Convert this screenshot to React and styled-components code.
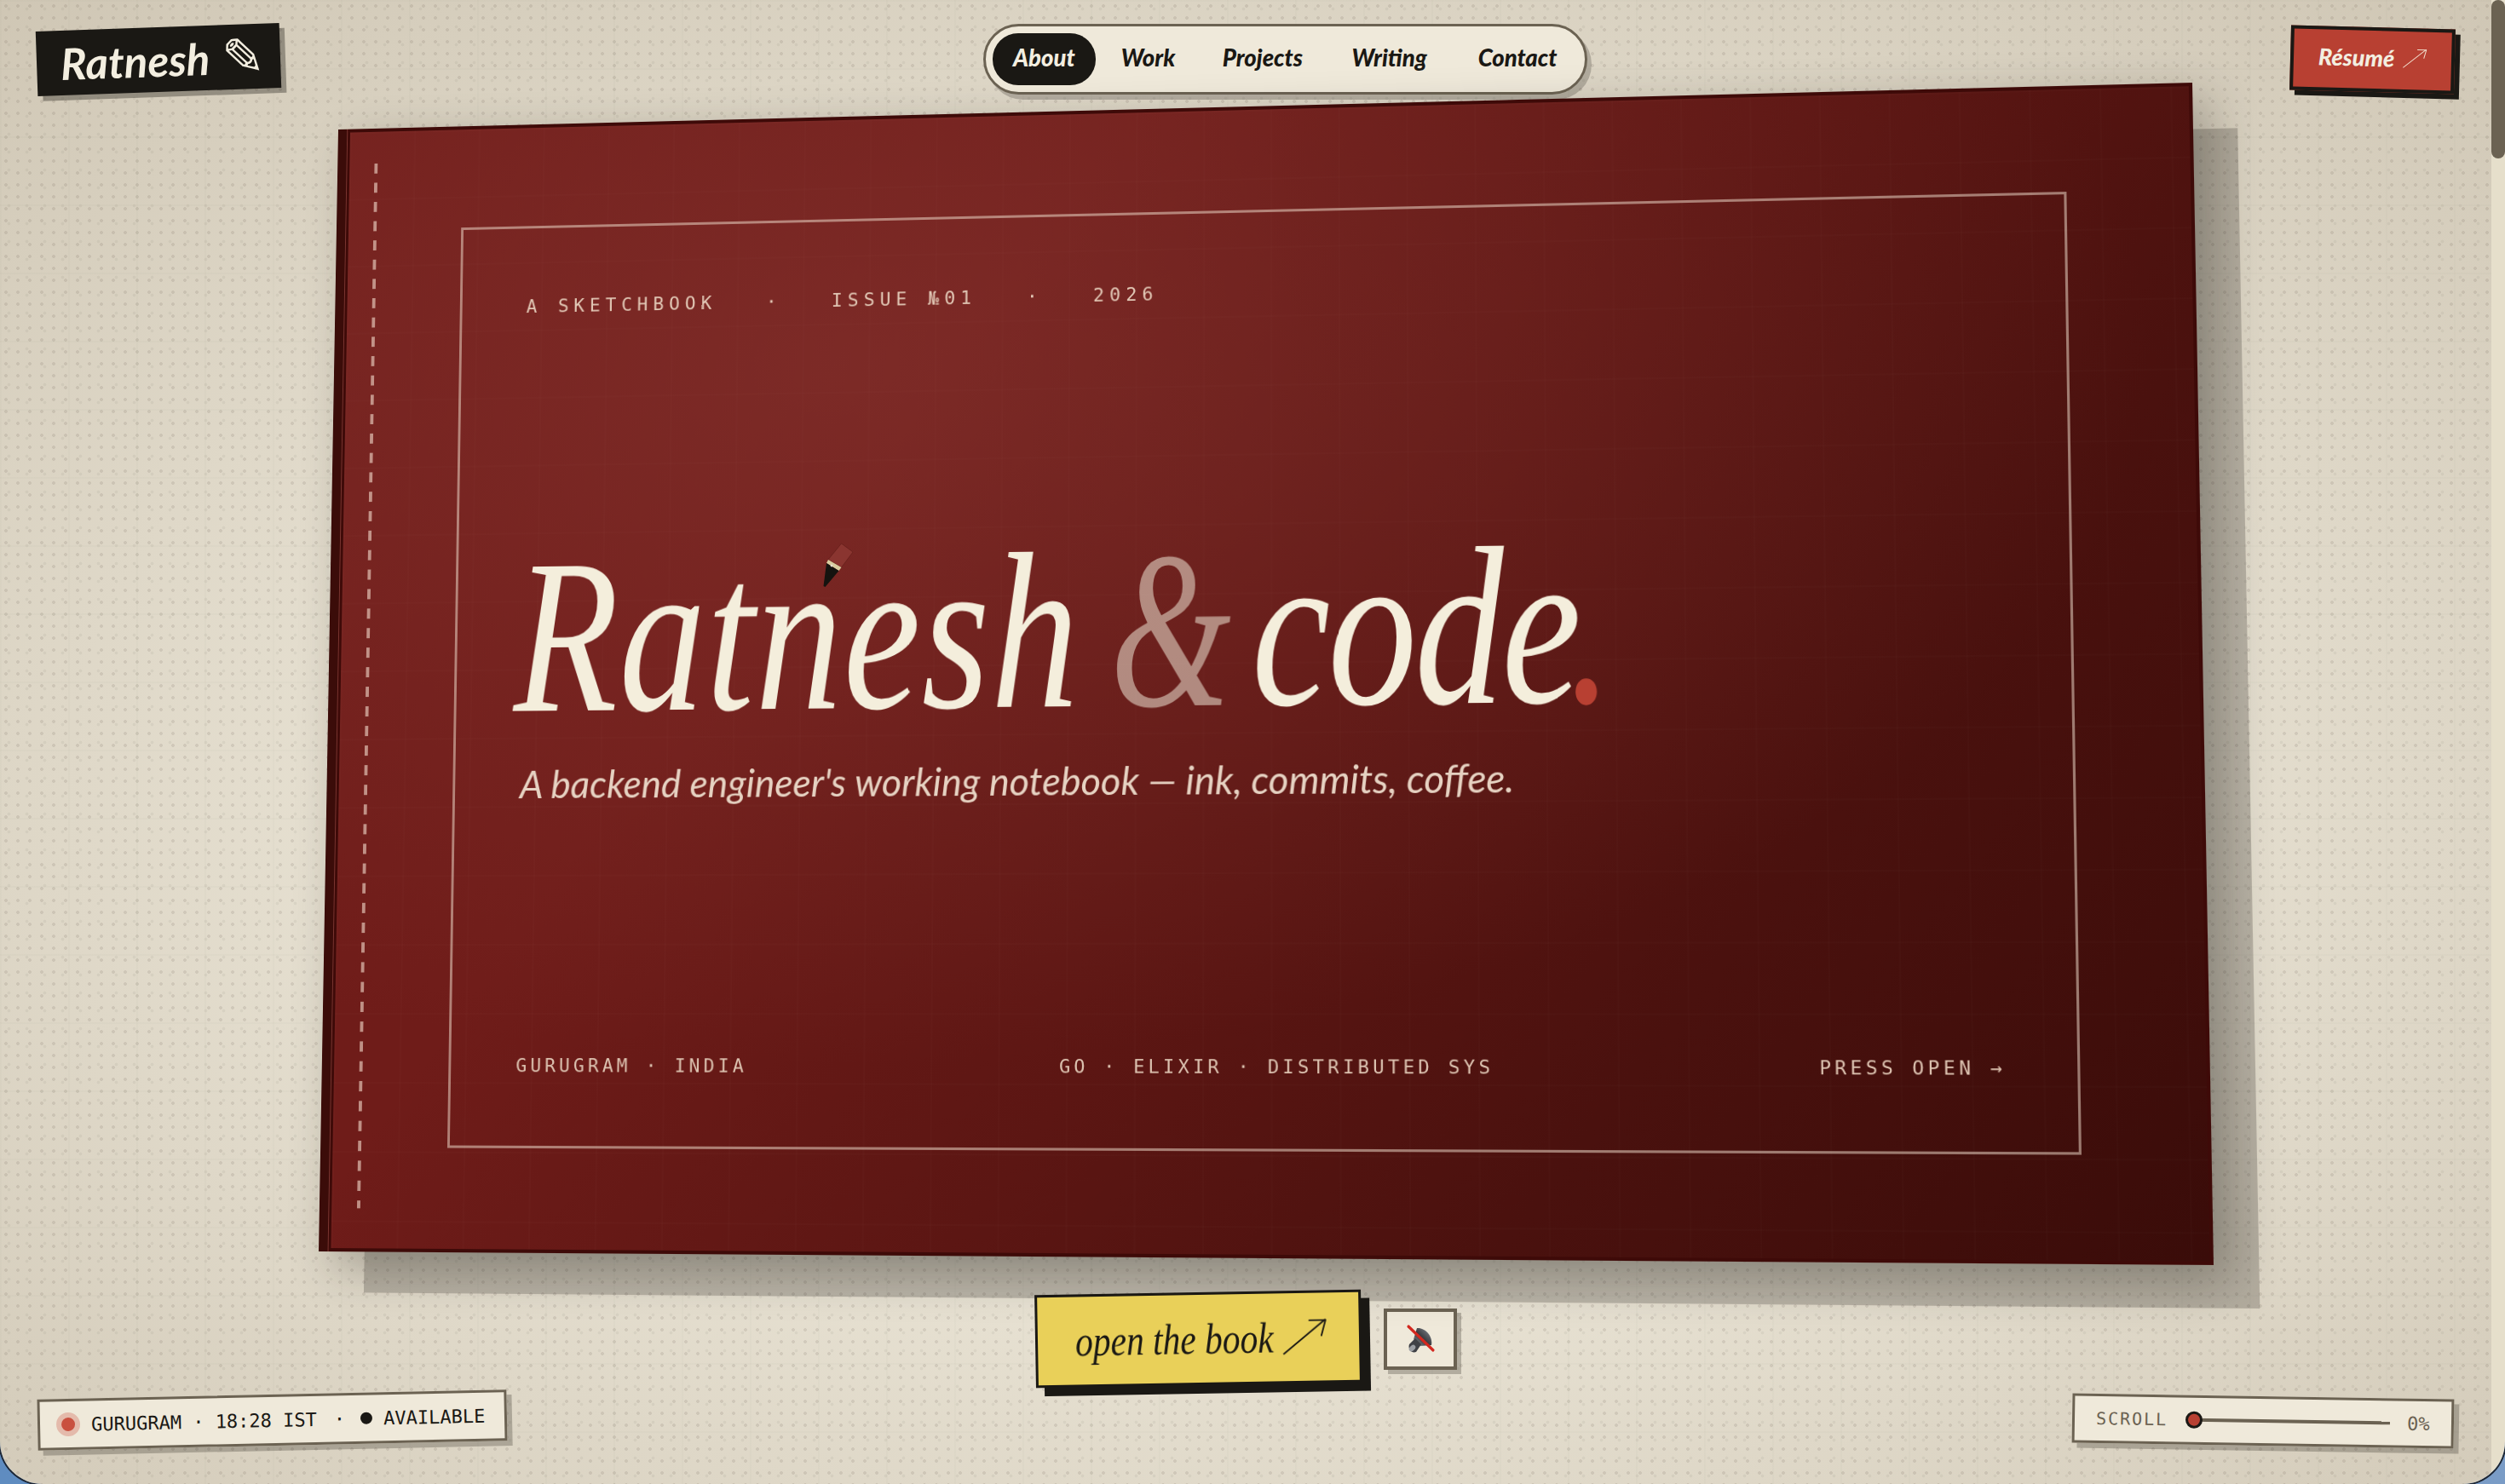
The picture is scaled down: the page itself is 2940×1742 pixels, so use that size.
import React from 'react'
import styled, {createGlobalStyle} from 'styled-components'

const INK = '#1a1814'
const CREAM = '#efe9da'
const TAUPE = '#6b6252'
const RED = '#b84032'
const HAND = '"Lato", "Noto Sans", sans-serif'
const SERIF = '"Liberation Serif", serif'
const MONO = '"DejaVu Sans Mono", monospace'

// book cover is laid out flat, then pulled onto the tilted quad seen on screen
const BOOK_W = 2200
const BOOK_H = 1320
const BOOK_LEFT = 362
const BOOK_TOP = 150

const quadMatrix = (w, h, [[x0, y0], [x1, y1], [x2, y2], [x3, y3]]) => {
  const dx1 = x1 - x2
  const dx2 = x3 - x2
  const sx = x0 - x1 + x2 - x3
  const dy1 = y1 - y2
  const dy2 = y3 - y2
  const sy = y0 - y1 + y2 - y3
  const det = dx1 * dy2 - dx2 * dy1
  const g = (sx * dy2 - dx2 * sy) / det
  const k = (dx1 * sy - sx * dy1) / det
  const a = x1 - x0 + g * x1
  const b = x3 - x0 + k * x3
  const d = y1 - y0 + g * y1
  const e = y3 - y0 + k * y3
  return `matrix3d(${[a / w, d / w, 0, g / w, b / h, e / h, 0, k / h, 0, 0, 1, 0, x0, y0, 0, 1].join(',')})`
}

const BOOK_MATRIX = quadMatrix(BOOK_W, BOOK_H, [
  [397 - BOOK_LEFT, 152 - BOOK_TOP],
  [2573 - BOOK_LEFT, 97 - BOOK_TOP],
  [2598 - BOOK_LEFT, 1485 - BOOK_TOP],
  [374 - BOOK_LEFT, 1469 - BOOK_TOP],
])

const Global = createGlobalStyle`
  html, body {
    margin: 0;
    padding: 0;
    overflow: hidden;
  }
`

const Backdrop = styled.div`
  width: 2940px;
  height: 1742px;
  overflow: hidden;
  background: linear-gradient(90deg, #5f8cc0, #7a9cc6);
`

const Window = styled.div`
  height: 100%;
  display: grid;
  grid-template-columns: 1fr 16px;
  overflow: hidden;
  border-radius: 0 0 50px 50px;
  box-shadow: 0 0 0 2px #1c2533;
`

const Paper = styled.main`
  position: relative;
  display: flex;
  flex-direction: column;
  background-color: #e7e1d2;
  background-image:
    radial-gradient(ellipse 75% 75% at 50% 55%, transparent 45%, rgba(110, 90, 60, 0.2) 100%),
    radial-gradient(circle, rgba(60, 50, 40, 0.11) 1.6px, transparent 2.2px),
    radial-gradient(circle, rgba(60, 50, 40, 0.06) 1.6px, transparent 2.2px),
    linear-gradient(rgba(60, 50, 40, 0.02) 2px, transparent 2px),
    linear-gradient(90deg, rgba(60, 50, 40, 0.02) 2px, transparent 2px);
  background-size: 100% 100%, 14px 14px, 21px 21px, 80px 80px, 80px 80px;
`

const ScrollTrack = styled.div`
  background: #e6dfcb;
`

const ScrollThumb = styled.div`
  height: 186px;
  border-radius: 8px;
  background: ${TAUPE};
`

const Header = styled.header`
  height: 83px;
  padding: 28px 43px 0;
  display: flex;
  align-items: center;
  justify-content: space-between;
`

const Logo = styled.a`
  width: 286px;
  height: 76px;
  padding-left: 28px;
  box-sizing: border-box;
  display: flex;
  align-items: center;
  gap: 14px;
  background: ${INK};
  color: #f3eee0;
  font: italic 700 51px ${HAND};
  transform: rotate(-2deg);
  box-shadow: 6px 6px 0 rgba(26, 22, 16, 0.35);
`

const Pencil = styled.span`
  font: normal 60px/1 "DejaVu Sans", sans-serif;
`

const Nav = styled.nav`
  width: 709px;
  height: 83px;
  box-sizing: border-box;
  padding: 0 8px;
  display: flex;
  align-items: center;
  border: 3px solid ${TAUPE};
  border-radius: 42px;
  background: ${CREAM};
  box-shadow: 5px 6px 0 rgba(26, 22, 16, 0.22);
`

const NavItem = styled.a`
  height: 61px;
  padding: 0 ${p => p.$pad}px 4px;
  box-sizing: border-box;
  display: flex;
  align-items: center;
  border-radius: 30px;
  font: italic 900 27.5px ${HAND};
  color: ${p => (p.$active ? '#f3eee0' : INK)};
  background: ${p => (p.$active ? INK : 'transparent')};
`

const ResumeLink = styled.a`
  width: 193px;
  height: 76px;
  padding-bottom: 5px;
  box-sizing: border-box;
  display: flex;
  align-items: center;
  justify-content: center;
  gap: 10px;
  border: 4px solid ${INK};
  background: ${RED};
  color: #f3eee0;
  font: italic 900 27px ${HAND};
  transform: rotate(1.5deg);
  box-shadow: 6px 6px 0 ${INK};
`

const Book = styled.section`
  position: relative;
  flex: none;
  width: ${BOOK_W}px;
  height: ${BOOK_H}px;
  margin: 39px auto 0;
  display: flex;
  transform-origin: 0 0;
  transform: ${BOOK_MATRIX};
  box-shadow: 53px 50px 0 -3px rgba(26, 22, 16, 0.22), 18px 18px 50px rgba(26, 22, 16, 0.3);
`

const Spine = styled.div`
  flex: none;
  width: 11px;
  background: #3b0c09;
  border-right: 1px solid #7a3530;
`

const Cover = styled.div`
  position: relative;
  flex: 1;
  min-width: 0;
  box-sizing: border-box;
  padding: 117px 140px 116px 140px;
  display: flex;
  border: 4px solid #3e0a08;
  border-left-width: 3px;
  background:
    radial-gradient(ellipse 70% 62% at 28% 22%, rgba(150, 70, 65, 0.34), transparent 100%),
    linear-gradient(rgba(255, 240, 220, 0.012) 2px, transparent 2px) 0 0 / 80px 80px,
    linear-gradient(90deg, rgba(255, 240, 220, 0.012) 2px, transparent 2px) 0 0 / 80px 80px,
    linear-gradient(128deg, #701c19 0%, #6f1c19 30%, #5c1613 55%, #4a110e 75%, #3a0c09 100%);
`

const Stitches = styled.div`
  position: absolute;
  top: 38px;
  bottom: 46px;
  left: 31px;
  width: 4px;
  background: repeating-linear-gradient(rgba(240, 215, 200, 0.62) 0 12px, transparent 12px 23px);
`

const Frame = styled.div`
  flex: 1;
  min-width: 0;
  padding: 0 80px 0 79px;
  display: flex;
  flex-direction: column;
  border: 3px solid rgba(240, 222, 205, 0.52);
`

const MetaRow = styled.div`
  margin-top: 80px;
  display: flex;
  gap: 60px;
  font: 22px ${MONO};
  letter-spacing: 6.2px;
  color: #e2c8b6;
  white-space: nowrap;
`

const Title = styled.h1`
  margin: 242px 0 0 -9px;
  font: italic 400 258px/1.05 ${SERIF};
  word-spacing: -30px;
  color: #f4eedc;
  white-space: nowrap;
  transform: scaleX(0.805);
  transform-origin: 0 50%;
`

const TitleWord = styled.span`
  letter-spacing: ${p => p.$track}px;
`

const Amp = styled.span`
  display: inline-block;
  margin: 0 -16px 0 -2px;
  color: rgba(244, 238, 220, 0.52);
  transform: scaleX(0.88);
`

const Dot = styled.span`
  margin-left: -16px;
  color: ${RED};
`

const Subtitle = styled.p`
  margin: 8px 0 0;
  font: italic 400 45.5px ${HAND};
  color: #e6d2c2;
  white-space: nowrap;
`

const FootRow = styled.div`
  margin-top: auto;
  margin-bottom: 80px;
  display: flex;
  justify-content: space-between;
  font: 22px ${MONO};
  color: #dcc2b0;
  white-space: nowrap;
`

const FootItem = styled.span`
  letter-spacing: ${p => p.$spacing}px;
`

const Footer = styled.footer`
  flex: 1;
  padding: 0 44px 45px;
  display: grid;
  grid-template-columns: 1fr auto 1fr;
`

const CtaGroup = styled.div`
  align-self: start;
  margin-top: 47px;
  display: flex;
  align-items: center;
  gap: 26px;
`

const OpenButton = styled.button`
  width: 383px;
  height: 109px;
  padding: 0 0 0 44px;
  box-sizing: border-box;
  display: flex;
  align-items: center;
  gap: 10px;
  border: 3px solid ${INK};
  background: #e9d059;
  color: ${INK};
  font: italic 400 50px ${SERIF};
  transform: rotate(-1deg);
  box-shadow: 10px 10px 0 ${INK};
`

const OpenLabel = styled.span`
  display: inline-block;
  width: 233px;
  white-space: nowrap;
  transform: scaleX(0.83);
  transform-origin: 0 50%;
`

const MuteButton = styled.button`
  width: 86px;
  height: 72px;
  padding: 0;
  box-sizing: border-box;
  display: flex;
  align-items: center;
  justify-content: center;
  border: 4px solid ${TAUPE};
  background: ${CREAM};
  box-shadow: 5px 5px 0 rgba(26, 22, 16, 0.25);
`

const Plate = styled.div`
  height: ${p => p.$height}px;
  box-sizing: border-box;
  display: flex;
  align-items: center;
  border: 3px solid ${TAUPE};
  background: ${CREAM};
  font: 22px ${MONO};
  white-space: nowrap;
  box-shadow: 6px 6px 0 rgba(26, 22, 16, 0.25);
`

const StatusPlate = styled(Plate)`
  align-self: end;
  justify-self: start;
  width: 551px;
  padding-left: 19px;
  color: ${INK};
  transform: rotate(-1.2deg);
`

const ScrollPlate = styled(Plate)`
  align-self: end;
  justify-self: end;
  width: 448px;
  padding-left: 25px;
  color: ${TAUPE};
  transform: rotate(0.9deg);
`

const Recording = styled.span`
  width: 16px;
  height: 16px;
  margin: 0 19px 0 6px;
  border-radius: 50%;
  background: #c9503f;
  box-shadow: 0 0 0 6px rgba(201, 80, 63, 0.3);
`

const Sep = styled.span`
  margin: 0 18px 0 20px;
`

const Available = styled.span`
  width: 14px;
  height: 14px;
  margin-right: 13px;
  border-radius: 50%;
  background: ${INK};
`

const ScrollLabel = styled.span`
  font-size: 20px;
  letter-spacing: 2px;
`

const ScrollRail = styled.div`
  position: relative;
  width: 230px;
  height: 4px;
  margin: 0 20px 0 31px;
  background: ${TAUPE};
`

const ScrollKnob = styled.span`
  position: absolute;
  left: -10px;
  top: -8px;
  width: 20px;
  height: 20px;
  box-sizing: border-box;
  border: 3px solid ${INK};
  border-radius: 50%;
  background: ${RED};
`

const PenCursor = styled.svg`
  position: absolute;
  left: 960px;
  top: 632px;
  width: 48px;
  height: 64px;
`

const NAV = [
  {label: 'About', pad: 24, active: true},
  {label: 'Work', pad: 30},
  {label: 'Projects', pad: 25.5},
  {label: 'Writing', pad: 32},
  {label: 'Contact', pad: 28},
]

const LongArrow = ({size, color, width}) => (
  <svg width={size} height={size * 0.82} viewBox="0 0 50 41" fill="none" stroke={color} strokeWidth={width}>
    <path d="M1 40 L49 1 M30 2 H49 L44 20"/>
  </svg>
)

const MutedSpeaker = () => (
  <svg width="36" height="36" viewBox="0 0 36 36">
    <defs>
      <linearGradient id="cone" x1="0" y1="1" x2="1" y2="0">
        <stop offset="0" stopColor="#a4a7ab"/>
        <stop offset="0.45" stopColor="#36383d"/>
        <stop offset="1" stopColor="#8d9096"/>
      </linearGradient>
    </defs>
    <path d="M14 5 C23 4 33 14 31 25 L18 26 L10 18 Z" fill="url(#cone)"/>
    <path d="M12 17 L19 24 L13 33 C8 35 3 30 5 24 Z" fill="#3f4146"/>
    <ellipse cx="8.5" cy="28.5" rx="3" ry="4.4" fill="#9b9ea3" transform="rotate(45 8.5 28.5)"/>
    <path d="M4 3 L33 31" stroke="#d3281f" strokeWidth="3.2" strokeLinecap="round"/>
  </svg>
)

const App = () => (
  <Backdrop>
    <Global/>
    <Window>
      <Paper>
        <Header>
          <Logo>Ratnesh <Pencil>✎</Pencil></Logo>
          <Nav>
            {NAV.map(item => (
              <NavItem key={item.label} $pad={item.pad} $active={item.active}>{item.label}</NavItem>
            ))}
          </Nav>
          <ResumeLink>Résumé <LongArrow size={28} color="#f0dccb" width={1.8}/></ResumeLink>
        </Header>

        <Book>
          <Spine/>
          <Cover>
            <Stitches/>
            <Frame>
              <MetaRow>
                <span>A SKETCHBOOK</span>
                <span>·</span>
                <span>ISSUE №01</span>
                <span>·</span>
                <span>2026</span>
              </MetaRow>
              <Title>
                <TitleWord $track={2.3}>Ratnesh</TitleWord> <Amp>&amp;</Amp> <TitleWord $track={-3.5}>code</TitleWord><Dot>.</Dot>
              </Title>
              <Subtitle>A backend engineer's working notebook — ink, commits, coffee.</Subtitle>
              <FootRow>
                <FootItem $spacing={4.2}>GURUGRAM · INDIA</FootItem>
                <FootItem $spacing={4.2}>GO · ELIXIR · DISTRIBUTED SYS</FootItem>
                <FootItem $spacing={4.2}>PRESS OPEN →</FootItem>
              </FootRow>
            </Frame>
          </Cover>
        </Book>

        <Footer>
          <StatusPlate $height={60}>
            <Recording/>
            <span>GURUGRAM · 18:28 IST</span>
            <Sep>·</Sep>
            <Available/>
            <span>AVAILABLE</span>
          </StatusPlate>
          <CtaGroup>
            <OpenButton>
              <OpenLabel>open the book</OpenLabel>
              <LongArrow size={52} color={INK} width={1.8}/>
            </OpenButton>
            <MuteButton><MutedSpeaker/></MuteButton>
          </CtaGroup>
          <ScrollPlate $height={58}>
            <ScrollLabel>SCROLL</ScrollLabel>
            <ScrollRail><ScrollKnob/></ScrollRail>
            <span>0%</span>
          </ScrollPlate>
        </Footer>

        <PenCursor viewBox="0 0 48 64">
          <path d="M27.5 6 L41 16 L27.5 34 L12 25 Z" fill="#8a3530" stroke="#5e1c18" strokeWidth="0.6"/>
          <path d="M12 25 L27.5 34 L24.5 38 L10 29 Z" fill="#d9cda0"/>
          <path d="M10 29 L24.5 38 L8.5 57 L6.5 56 Z" fill="#15130f"/>
          <circle cx="16" cy="32" r="1.4" fill="#e6e0d1"/>
        </PenCursor>
      </Paper>
      <ScrollTrack><ScrollThumb/></ScrollTrack>
    </Window>
  </Backdrop>
)

export default App
